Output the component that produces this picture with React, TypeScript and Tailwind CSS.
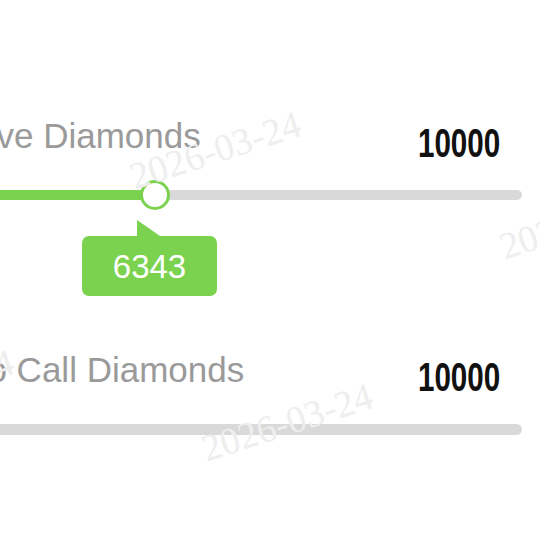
import React from "react";

const GREEN = "#7bd24f";

function Watermark({ x, y }: { x: number; y: number }) {
  return (
    <div
      className="pointer-events-none absolute -translate-x-1/2 -translate-y-1/2 rotate-[-18deg] whitespace-nowrap text-[38px] leading-none text-[#eeeeee]"
      style={{ left: x, top: y, fontFamily: '"Liberation Serif", serif' }}
    >
      2026-03-24
    </div>
  );
}

function Header({ label, amount, indent = "" }: { label: string; amount: string; indent?: string }) {
  return (
    <div className="flex items-end justify-between">
      <span className={`mb-[10px] whitespace-nowrap text-[35px] leading-none text-[#9a9a9a] ${indent}`}>
        {label}
      </span>
      <span className="mr-[22px] inline-block origin-right scale-x-[0.74] text-[40px] font-bold leading-none text-[#111]">
        {amount}
      </span>
    </div>
  );
}

export default function App() {
  return (
    <div
      className="relative h-[540px] w-[540px] overflow-hidden bg-white"
      style={{ fontFamily: '"Liberation Sans", Arial, sans-serif' }}
    >
      <div className="ml-[-93px] w-[615px] pt-[118px]">
        {/* Row 1 */}
        <Header label="Receive Diamonds" amount="10000" />
        <div className="relative mt-[27px] h-[10px] rounded-full bg-[#d9d9d9]">
          <div
            className="absolute left-0 top-0 h-full w-[248px] rounded-l-full"
            style={{ backgroundColor: GREEN }}
          />
          <div
            className="absolute left-[233px] top-[-10px] h-[30px] w-[30px] rounded-full border-[3px] bg-white"
            style={{ borderColor: GREEN }}
          />
          <div className="absolute left-[175px] top-[30px] flex flex-col">
            <svg width="23" height="16" viewBox="0 0 23 16" className="ml-[55px] block">
              <polygon points="0,0 0,16 23,16" fill={GREEN} />
            </svg>
            <div
              className="flex h-[60px] w-[135px] items-center justify-center rounded-[7px] text-[33px] leading-none text-white"
              style={{ backgroundColor: GREEN }}
            >
              6343
            </div>
          </div>
        </div>

        {/* Row 2 */}
        <div className="mt-[152px]">
          <Header label="Video Call Diamonds" amount="10000" indent="pl-[11px]" />
        </div>
        <div className="mt-[27px] h-[11px] rounded-full bg-[#d9d9d9]" />
      </div>

      <Watermark x={215} y={150} />
      <Watermark x={287} y={422} />
      <Watermark x={585} y={220} />
      <Watermark x={-72} y={388} />
    </div>
  );
}
